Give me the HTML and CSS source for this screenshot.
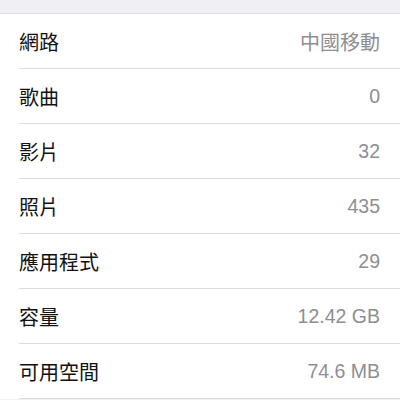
FILE: index.html
```html
<!DOCTYPE html>
<html lang="zh-Hant">
<head>
    <meta charset="UTF-8">
    <meta name="viewport" content="width=device-width, initial-scale=1.0">
    <title>關於本機</title>
    <link rel="stylesheet" href="styles.css">
</head>
<body>
    <ul class="info-list">
        <li class="info-row"><span class="label">網路</span><span class="value cjk">中國移動</span></li>
        <li class="info-row"><span class="label">歌曲</span><span class="value">0</span></li>
        <li class="info-row"><span class="label">影片</span><span class="value">32</span></li>
        <li class="info-row"><span class="label">照片</span><span class="value">435</span></li>
        <li class="info-row"><span class="label">應用程式</span><span class="value">29</span></li>
        <li class="info-row"><span class="label">容量</span><span class="value">12.42 GB</span></li>
        <li class="info-row"><span class="label">可用空間</span><span class="value">74.6 MB</span></li>
    </ul>
</body>
</html>
```

FILE: styles.css
```css
body {
    margin: 0;
    padding-top: 13px;
    background-color: #efeff4;
    font-family: "Liberation Sans", "Noto Sans CJK TC", sans-serif;
}

.info-list {
    list-style: none;
    margin: 0;
    padding: 0;
    background-color: #fff;
    border-top: 1px solid #dedee2;
}

.info-row {
    display: flex;
    justify-content: space-between;
    align-items: center;
    height: 54px;
    margin-left: 19px;
    padding-right: 20px;
    border-bottom: 1px solid #dcdcdf;
}

.label {
    font-size: 20px;
    color: #111;
}

.value {
    font-size: 19.5px;
    color: #8e8e93;
}

.value.cjk {
    font-size: 20px;
}
```
